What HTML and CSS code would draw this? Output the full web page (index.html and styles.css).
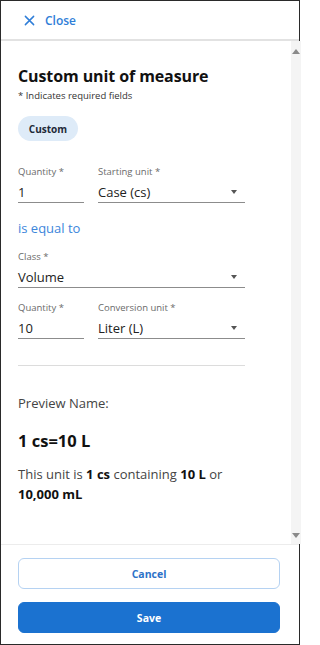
FILE: index.html
```html
<!DOCTYPE html>
<html lang="en">
<head>
<meta charset="utf-8">
<title>Custom unit of measure</title>
<link rel="stylesheet" href="styles.css">
</head>
<body>
<div class="panel">
  <header class="header">
    <button class="close">
      <svg class="close-icon" viewBox="0 0 12 12" width="11" height="11" aria-hidden="true">
        <path d="M1.5 1.5 L10.5 10.5 M10.5 1.5 L1.5 10.5" stroke="#2f7ed8" stroke-width="1.6" stroke-linecap="round" fill="none"/>
      </svg>
      <span>Close</span>
    </button>
  </header>
  <div class="body">
    <main class="content">
      <h1 class="title">Custom unit of measure</h1>
      <p class="required">* Indicates required fields</p>
      <span class="chip">Custom</span>

      <div class="row row-first">
        <div class="field field-qty">
          <span class="label">Quantity *</span>
          <span class="value">1</span>
        </div>
        <div class="field field-unit">
          <span class="label">Starting unit *</span>
          <span class="value">Case (cs)<i class="caret"></i></span>
        </div>
      </div>

      <p class="equal">is equal to</p>

      <div class="row row-class">
        <div class="field field-full">
          <span class="label">Class *</span>
          <span class="value">Volume<i class="caret"></i></span>
        </div>
      </div>

      <div class="row row-third">
        <div class="field field-qty">
          <span class="label">Quantity *</span>
          <span class="value">10</span>
        </div>
        <div class="field field-unit">
          <span class="label">Conversion unit *</span>
          <span class="value">Liter (L)<i class="caret"></i></span>
        </div>
      </div>

      <hr class="divider">

      <p class="preview-label">Preview Name:</p>
      <p class="preview-name">1 cs=10 L</p>
      <p class="desc">This unit is <b>1 cs</b> containing <b>10 L</b> or <b>10,000 mL</b></p>
    </main>
    <div class="scrollbar">
      <i class="arrow-up"></i>
      <i class="arrow-down"></i>
    </div>
  </div>
  <footer class="footer">
    <button class="btn btn-cancel">Cancel</button>
    <button class="btn btn-save">Save</button>
  </footer>
</div>
</body>
</html>
```

FILE: styles.css
```css
* { box-sizing: border-box; }
html, body { margin: 0; padding: 0; background: #fff; }
body { font-family: "Open Sans", "Noto Sans", "Liberation Sans", sans-serif; color: #1f1f1f; }

.panel {
  width: 300px;
  height: 645px;
  border: 1px solid #2a2a2a;
  display: flex;
  flex-direction: column;
  background: #fff;
}

.header {
  height: 40px;
  flex: 0 0 40px;
  border-bottom: 2px solid #e2e2e2;
  display: flex;
  align-items: center;
  padding-left: 23px;
}
.close {
  display: flex;
  align-items: center;
  gap: 10px;
  background: none;
  border: 0;
  padding: 0;
  font-family: inherit;
  font-size: 12px;
  font-weight: 600;
  color: #2f7ed8;
}
.close-icon { display: block; }

.body {
  flex: 1 1 auto;
  display: flex;
  min-height: 0;
  border-bottom: 1px solid #ececec;
}
.content {
  flex: 1 1 auto;
  padding: 23px 41px 0 17px;
}
.scrollbar {
  flex: 0 0 10px;
  background: #f4f4f4;
  display: flex;
  flex-direction: column;
  justify-content: space-between;
  align-items: center;
  padding: 8px 0 6px;
}
.arrow-up, .arrow-down {
  width: 0; height: 0;
  border-left: 4px solid transparent;
  border-right: 4px solid transparent;
}
.arrow-up { border-bottom: 5px solid #8a8a8a; }
.arrow-down { border-top: 5px solid #8a8a8a; }

.title {
  margin: 0;
  font-size: 16px;
  line-height: 24px;
  font-weight: 700;
  color: #111;
  letter-spacing: -0.1px;
}
.required {
  margin: 2px 0 0;
  font-size: 9.5px;
  line-height: 12px;
  color: #333;
}
.chip {
  display: inline-flex;
  align-items: center;
  justify-content: center;
  margin-top: 14px;
  width: 60px;
  height: 25px;
  border-radius: 13px;
  background: #deebf8;
  font-size: 10px;
  font-weight: 700;
  color: #1e2a38;
}

.row { display: flex; gap: 14px; }
.row-first { margin-top: 25px; }
.row-class { margin-top: 14px; }
.row-third { margin-top: 14px; }

.field {
  display: flex;
  flex-direction: column;
  border-bottom: 1px solid #8c8c8c;
}
.field-qty { width: 66px; }
.field-unit { width: 147px; }
.field-full { width: 227px; }
.label {
  font-size: 9.5px;
  line-height: 12px;
  color: #6a6a6a;
  margin-bottom: 4px;
}
.value {
  display: flex;
  align-items: center;
  justify-content: space-between;
  font-size: 13px;
  line-height: 20px;
  color: #222;
}
.caret {
  width: 0; height: 0;
  margin-right: 8px;
  border-left: 3.5px solid transparent;
  border-right: 3.5px solid transparent;
  border-top: 4px solid #555;
}

.equal {
  margin: 16px 0 0;
  font-size: 13px;
  line-height: 18px;
  color: #3c86db;
}

.divider {
  margin: 26px 0 0;
  width: 227px;
  border: 0;
  border-top: 1px solid #dcdcdc;
}

.preview-label {
  margin: 28px 0 0;
  font-size: 13px;
  line-height: 18px;
  color: #444;
}
.preview-name {
  margin: 18px 0 0;
  font-size: 16.5px;
  line-height: 22px;
  font-weight: 700;
  color: #111;
}
.desc {
  margin: 12px 0 0;
  font-size: 13px;
  line-height: 20px;
  color: #444;
  width: 232px;
}
.desc b { color: #111; font-weight: 700; }

.footer {
  flex: 0 0 auto;
  padding: 13px 18px 11px 17px;
  display: flex;
  flex-direction: column;
  gap: 13px;
}
.btn {
  height: 31px;
  width: 262px;
  border-radius: 6px;
  font-family: inherit;
  font-size: 10.5px;
  font-weight: 700;
}
.btn-cancel {
  background: #fff;
  border: 1px solid #b5d2f2;
  color: #2d72c8;
}
.btn-save {
  background: #1b72d0;
  border: 1px solid #1b72d0;
  color: #fff;
}
```
